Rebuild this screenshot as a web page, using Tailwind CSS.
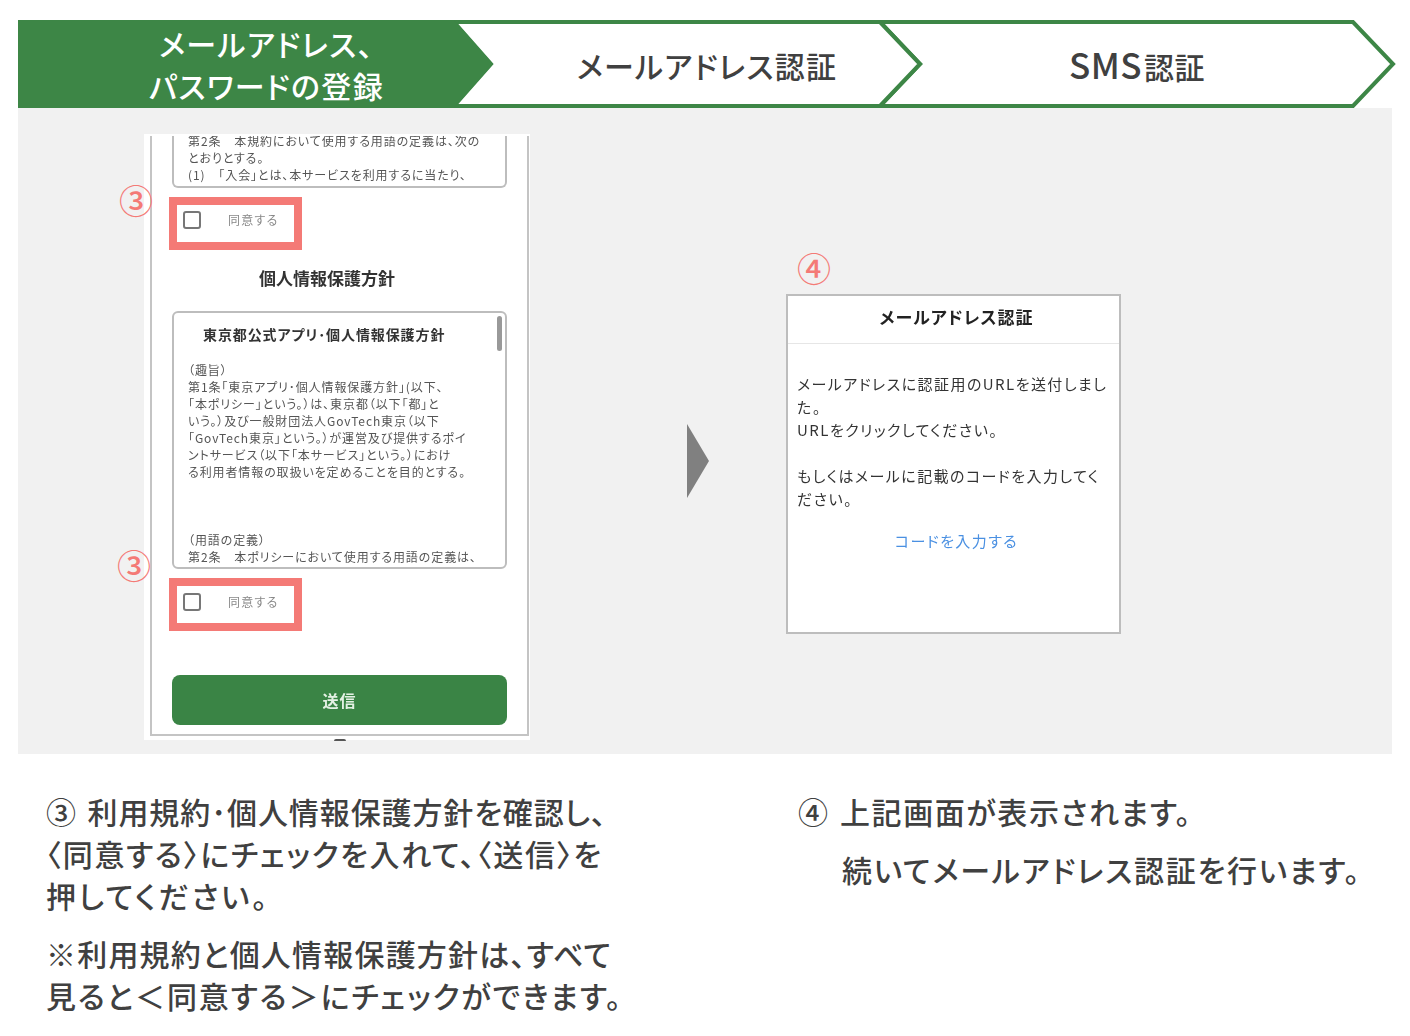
<!DOCTYPE html>
<html lang="ja">
<head>
  <meta charset="UTF-8" />
  <meta name="viewport" content="width=device-width, initial-scale=1.0"/>
  <title>メールアドレス、パスワードの登録</title>
  <script src="https://cdn.jsdelivr.net/npm/@tailwindcss/browser@4"></script>
</head>

<body class="bg-white pt-[20px] font-['Noto_Sans_CJK_JP','Noto_Sans',sans-serif] text-[#404040] [font-feature-settings:'palt']">

<!-- Stepper -->
<div class="relative ml-[18px] w-[1378px] h-[88px]">
  <svg class="absolute inset-0" width="1378" height="88" viewBox="0 0 1378 88" fill="none">
    <path d="M862 2H1335L1375 44L1335 86H862L902 44Z" fill="#fff" stroke="#3d8646" stroke-width="4"/>
    <path d="M436 2H862L902 44L862 86H436L473 44Z" fill="#fff" stroke="#3d8646" stroke-width="4"/>
    <path d="M0 0H436L475 44L436 88H0Z" fill="#3d8646"/>
  </svg>
  <div class="relative flex h-full items-center font-medium">
    <div class="w-[497px] text-center text-[30px] leading-[42px] tracking-[1.4px] text-white">メールアドレス、<br>パスワードの登録</div>
    <div class="w-[384px] pt-[2px] text-center text-[30px] leading-[42px] tracking-[1.3px]">メールアドレス認証</div>
    <div class="w-[476px] pt-[2px] text-center text-[30px] leading-[42px]"><span class="text-[35px] tracking-[0.5px]">SMS</span><span class="ml-[2px] tracking-[0.5px]">認証</span></div>
  </div>
</div>

<!-- Gray panel -->
<div class="ml-[18px] flex h-[646px] w-[1374px] items-start bg-[#f1f1f1]">

  <!-- Phone screen -->
  <div class="relative ml-[126px] mt-[26px] h-[606px] w-[386px] bg-white pl-[6px] pt-[2px]">
    <div class="h-[600px] w-[379px] border-2 border-t-0 border-[#c4c4c4] px-[20px] blur-[0.7px]">
      <div class="h-[52px] overflow-hidden rounded-b-md border-2 border-t-0 border-[#bdbdbd] px-[14px] text-[12px] leading-[17px] tracking-[0.9px] text-[#555]">
        <p class="mt-[-4px]">第2条　本規約において使用する用語の定義は、次の</p>
        <p>とおりとする。</p>
        <p>(1)　「入会」とは、本サービスを利用するに当たり、</p>
      </div>
      <div class="ml-[-3px] mt-[9px] flex h-[53px] w-[133px] items-center border-[8px] border-[#f47a76] pb-[7px] pl-[6px]">
        <span class="h-[18px] w-[18px] rounded-[3px] border-2 border-[#777]"></span>
        <span class="ml-[27px] text-[12px] tracking-[1.2px] text-[#888]">同意する</span>
      </div>
      <h2 class="ml-[87px] mt-[16px] text-[17px] font-bold leading-[24px] text-[#333]">個人情報保護方針</h2>
      <div class="relative mt-[21px] h-[258px] rounded-md border-2 border-[#bdbdbd] pl-[14px] pt-[11px] text-[12px] leading-[17px] tracking-[0.9px] text-[#555]">
        <span class="absolute right-[3px] top-[3px] h-[35px] w-[5px] rounded-sm bg-[#999]"></span>
        <p class="ml-[15px] text-[14px] font-bold leading-[20px] text-[#333]">東京都公式アプリ･個人情報保護方針</p>
        <p class="mt-[17px]">（趣旨）</p>
        <p>第1条「東京アプリ･個人情報保護方針」(以下、</p>
        <p>「本ポリシー」という。）は、東京都（以下「都」と</p>
        <p>いう。）及び一般財団法人GovTech東京（以下</p>
        <p>「GovTech東京」という。）が運営及び提供するポイ</p>
        <p>ントサービス（以下「本サービス」という。）におけ</p>
        <p>る利用者情報の取扱いを定めることを目的とする。</p>
        <p class="mt-[51px]">（用語の定義）</p>
        <p>第2条　本ポリシーにおいて使用する用語の定義は、</p>
      </div>
      <div class="ml-[-3px] mt-[9px] flex h-[53px] w-[133px] items-center border-[8px] border-[#f47a76] pb-[5px] pl-[6px]">
        <span class="h-[18px] w-[18px] rounded-[3px] border-2 border-[#777]"></span>
        <span class="ml-[27px] text-[12px] tracking-[1.2px] text-[#888]">同意する</span>
      </div>
      <button class="mt-[44px] h-[50px] w-[335px] rounded-lg bg-[#3a8445] text-[16px] font-bold tracking-[1px] text-[#e4f1e4]">送信</button>
    </div>
    <span class="absolute left-[-25px] top-[44px] text-[34px] font-medium leading-[44px] text-[#f47a76]">③</span>
    <span class="absolute left-[-27px] top-[409px] text-[34px] font-medium leading-[44px] text-[#f47a76]">③</span>
    <span class="absolute bottom-[-1px] left-[190px] h-[2px] w-[12px] rounded-t-full bg-[#555]"></span>
  </div>

  <!-- Arrow -->
  <svg class="ml-[157px] mt-[316px]" width="22" height="74" viewBox="0 0 22 74"><path d="M0 0L22 37L0 74Z" fill="#808080"/></svg>

  <!-- Mail verification screen -->
  <div class="relative ml-[77px] mt-[186px] h-[340px] w-[335px] border-2 border-[#bdbdbd] bg-white">
    <span class="absolute left-[9px] top-[-50px] text-[34px] font-medium leading-[44px] text-[#f47a76]">④</span>
    <div class="flex h-[48px] items-center justify-center border-b border-[#e6e6e6] pb-[5px] pl-[6px] text-[17px] font-bold tracking-[1px] text-[#222] blur-[0.5px]">メールアドレス認証</div>
    <div class="px-[9px] pt-[28px] text-[15px] leading-[23px] tracking-[1.45px] text-[#333] blur-[0.5px]">
      <p>メールアドレスに認証用のURLを送付しました。<br>URLをクリックしてください。</p>
      <p class="mt-[23px]">もしくはメールに記載のコードを入力してください。</p>
      <p class="mt-[19px] pl-[6px] text-center text-[#4a90e2]">コードを入力する</p>
    </div>
  </div>
</div>

<!-- Notes -->
<div class="flex pt-[36px] text-[30px] font-medium leading-[42px]">
  <div class="ml-[46px] w-[600px] whitespace-nowrap">
    <p class="tracking-[0.9px]"><span class="mr-[3px]">③</span> 利用規約･個人情報保護方針を確認し、</p>
    <p class="tracking-[1.7px]">〈同意する〉にチェックを入れて、〈送信〉を</p>
    <p class="tracking-[2.7px]">押してください。</p>
    <p class="mt-[16px] tracking-[1.2px]">※利用規約と個人情報保護方針は、すべて</p>
    <p class="tracking-[1.9px]">見ると＜同意する＞にチェックができます。</p>
  </div>
  <div class="ml-[152px] whitespace-nowrap">
    <p class="tracking-[1.6px]"><span class="mr-[2px]">④</span> 上記画面が表示されます。</p>
    <p class="mt-[16px] pl-[44px] tracking-[1.8px]">続いてメールアドレス認証を行います。</p>
  </div>
</div>

</body>
</html>
